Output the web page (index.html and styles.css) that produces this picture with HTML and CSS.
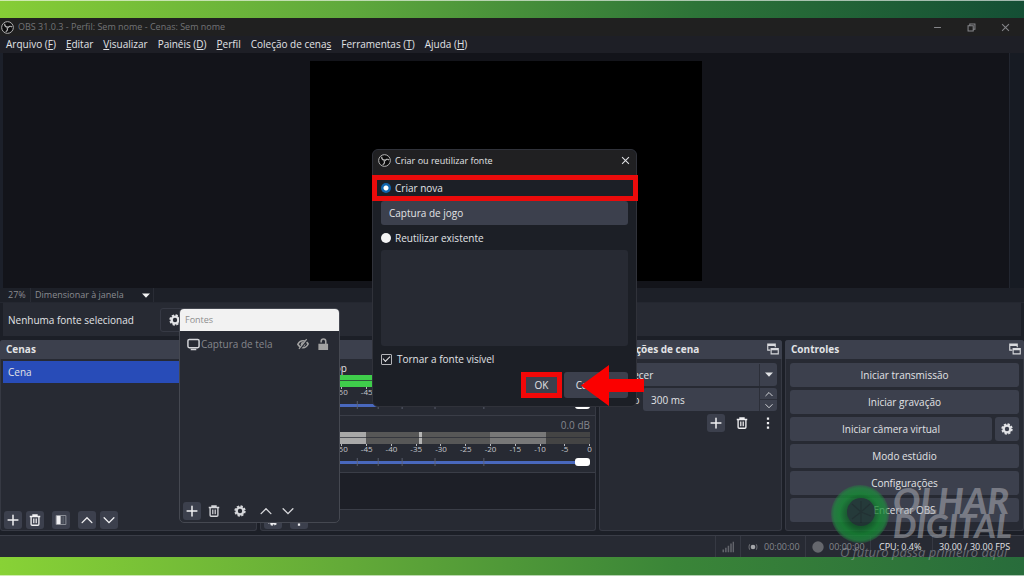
FILE: index.html
```html
<!DOCTYPE html>
<html lang="pt-BR">
<head>
<meta charset="utf-8">
<title>OBS 31.0.3</title>
<link rel="stylesheet" href="styles.css">
</head>
<body>
<svg class="defs" aria-hidden="true">
  <symbol id="obs" viewBox="0 0 16 16"><circle cx="8" cy="8" r="7.200" fill="#0c0c0d" stroke="currentColor" stroke-width="1.200"/><g fill="none" stroke="currentColor" stroke-width="1.500"><path id="arm" d="M8.400 7.300C6 7.600 4.200 6 4.600 3.400"/><path d="M8.400 7.300C6 7.600 4.200 6 4.600 3.400" transform="rotate(120 8 8)"/><path d="M8.400 7.300C6 7.600 4.200 6 4.600 3.400" transform="rotate(240 8 8)"/></g></symbol>
  <symbol id="plus" viewBox="0 0 16 16"><path d="M8 1.500v13M1.500 8h13" stroke="currentColor" stroke-width="2" fill="none" stroke-linecap="round"/></symbol>
  <symbol id="trash" viewBox="0 0 16 16"><path d="M1 3.300h14M5.300 3V1.300h5.400V3M2.800 3.600v10q0 1.400 1.400 1.400h7.600q1.400 0 1.400-1.400v-10" fill="none" stroke="currentColor" stroke-width="1.800"/><path d="M6 6v6.300M8 6v6.300M10 6v6.300" stroke="currentColor" stroke-width="1.100" fill="none"/></symbol>
  <symbol id="filter" viewBox="0 0 16 16"><path d="M1.500 2h13v12h-13z" fill="none" stroke="#8d9098" stroke-width="1.300"/><path d="M2 2.500h5.500v11H2z" fill="currentColor"/><path d="M9.500 3v10M11.500 3v10" stroke="#666a74" stroke-width="1"/></symbol>
  <symbol id="up" viewBox="0 0 16 16"><path d="M1.500 11.500 8 5l6.500 6.500" fill="none" stroke="currentColor" stroke-width="1.800" stroke-linecap="round"/></symbol>
  <symbol id="down" viewBox="0 0 16 16"><path d="M1.500 5 8 11.500 14.500 5" fill="none" stroke="currentColor" stroke-width="1.800" stroke-linecap="round"/></symbol>
  <symbol id="gear" viewBox="0 0 16 16"><circle cx="8" cy="8" r="4.500" fill="none" stroke="currentColor" stroke-width="3.200"/><circle cx="8" cy="8" r="6.500" fill="none" stroke="currentColor" stroke-width="2.200" stroke-dasharray="3 2.105"/></symbol>
  <symbol id="dots" viewBox="0 0 16 16"><path d="M6.500 0.500h3v3h-3zM6.500 6.500h3v3h-3zM6.500 12.500h3v3h-3z" fill="currentColor"/></symbol>
  <symbol id="float" viewBox="0 0 16 16"><path d="M4.500 9.500H1v-8h10v4M1 3.200H11" fill="none" stroke="currentColor" stroke-width="1.500"/><path d="M5.500 7.500H15v7H5.500zM5.500 8.800H15" fill="none" stroke="currentColor" stroke-width="1.500"/></symbol>
  <symbol id="close" viewBox="0 0 16 16"><path d="M3 3l10 10M13 3 3 13" fill="none" stroke="currentColor" stroke-width="1.500"/></symbol>
  <symbol id="caret" viewBox="0 0 8 5"><path d="M0 .5h8L4 4.700z" fill="currentColor"/></symbol>
  <symbol id="ticks" viewBox="0 0 296 10" preserveAspectRatio="none"><path d="M62.500 0v10M83.500 0v10M107.500 0v10M140.500 0v10M189.500 0v10" stroke="#5d6272" stroke-width="1"/></symbol>
</svg>

<div class="app">
  <header class="titlebar">
    <svg class="logo"><use href="#obs"/></svg>
    <span class="titlebar-text">OBS 31.0.3 - Perfil: Sem nome - Cenas: Sem nome</span>
    <button class="win-btn" aria-label="Minimizar"><svg viewBox="0 0 16 16"><path d="M3 8h10" stroke="currentColor" stroke-width="1.500"/></svg></button>
    <button class="win-btn" aria-label="Restaurar"><svg viewBox="0 0 16 16"><path d="M3 5.500h7.500V13H3zM5.500 5.300V3h7.500v7.500h-2.300" fill="none" stroke="currentColor" stroke-width="1.500"/></svg></button>
    <button class="win-btn" aria-label="Fechar"><svg><use href="#close"/></svg></button>
  </header>
  <nav class="menubar">
    <a href="#">Arquivo (<u>F</u>)</a>
    <a href="#"><u>E</u>ditar</a>
    <a href="#"><u>V</u>isualizar</a>
    <a href="#">Painéis (<u>D</u>)</a>
    <a href="#"><u>P</u>erfil</a>
    <a href="#">Coleção de cena<u>s</u></a>
    <a href="#">Ferramentas (<u>T</u>)</a>
    <a href="#">Ajuda (<u>H</u>)</a>
  </nav>

  <main class="preview"><div class="canvas"></div><div class="preview-scroll"></div></main>
  <div class="zoombar">
    <span class="zoom-value">27%</span>
    <button class="zoom-mode"><span>Dimensionar à janela</span><svg class="caret"><use href="#caret"/></svg></button>
  </div>
  <div class="source-bar">
    <span>Nenhuma fonte selecionad</span>
    <button class="source-props" aria-label="Propriedades"><svg class="icon"><use href="#gear"/></svg></button>
  </div>

  <div class="docks">
    <section class="dock">
      <h2 class="dock-title">Cenas</h2>
      <ul class="scene-list"><li class="scene selected">Cena</li></ul>
      <div class="toolbar">
        <button class="tool" aria-label="Adicionar cena"><svg class="icon"><use href="#plus"/></svg></button>
        <button class="tool" aria-label="Remover cena"><svg class="icon"><use href="#trash"/></svg></button>
        <button class="tool group" aria-label="Filtros"><svg class="icon"><use href="#filter"/></svg></button>
        <button class="tool group" aria-label="Subir"><svg class="icon"><use href="#up"/></svg></button>
        <button class="tool" aria-label="Descer"><svg class="icon"><use href="#down"/></svg></button>
      </div>
    </section>

    <section class="dock">
      <h2 class="dock-title">Mixer</h2>
      <div class="channel">
        <label class="channel-head" for="vol1"><span>Áudio do desktop</span></label>
        <div class="meter live"></div>
        <div class="scale"><span>-60</span><span>-55</span><span>-50</span><span>-45</span><span>-40</span><span>-35</span><span>-30</span><span>-25</span><span>-20</span><span>-15</span><span>-10</span><span>-5</span><span>0</span></div>
        <div class="fader"><input id="vol1" type="range" value="100"><svg><use href="#ticks"/></svg></div>
      </div>
      <div class="channel">
        <label class="channel-head" for="vol2"><span>Mic/Aux</span><span class="db">0.0 dB</span></label>
        <div class="meter muted"></div>
        <div class="scale"><span>-60</span><span>-55</span><span>-50</span><span>-45</span><span>-40</span><span>-35</span><span>-30</span><span>-25</span><span>-20</span><span>-15</span><span>-10</span><span>-5</span><span>0</span></div>
        <div class="fader"><input id="vol2" type="range" value="100"><svg><use href="#ticks"/></svg></div>
      </div>
      <div class="mixer-empty"></div>
      <div class="toolbar mixer-tools">
        <button class="tool" aria-label="Propriedades de áudio"><svg class="icon"><use href="#gear"/></svg></button>
        <button class="tool group" aria-label="Mais"><svg class="icon"><use href="#dots"/></svg></button>
      </div>
    </section>

    <section class="dock">
      <h2 class="dock-title">Transições de cena<svg class="icon"><use href="#float"/></svg></h2>
      <div class="transitions">
        <button class="combo"><span>Esmaecer</span><span class="combo-arrow"><svg class="caret"><use href="#caret"/></svg></span></button>
        <div class="duration">
          <label for="dur">Duração</label>
          <div class="spin">
            <input id="dur" type="text" value="300 ms">
            <div class="spin-btns"><button aria-label="Aumentar"><svg><use href="#up"/></svg></button><button aria-label="Diminuir"><svg><use href="#down"/></svg></button></div>
          </div>
        </div>
        <div class="transition-tools">
          <button class="tool" aria-label="Adicionar transição"><svg class="icon"><use href="#plus"/></svg></button>
          <button class="tool flat" aria-label="Remover transição"><svg class="icon"><use href="#trash"/></svg></button>
          <button class="tool flat" aria-label="Opções"><svg class="icon"><use href="#dots"/></svg></button>
        </div>
      </div>
    </section>

    <section class="dock">
      <h2 class="dock-title">Controles<svg class="icon"><use href="#float"/></svg></h2>
      <div class="controls">
        <button class="btn">Iniciar transmissão</button>
        <button class="btn">Iniciar gravação</button>
        <div class="btn-row"><button class="btn">Iniciar câmera virtual</button><button class="btn btn-gear" aria-label="Configurar câmera virtual"><svg class="icon"><use href="#gear"/></svg></button></div>
        <button class="btn">Modo estúdio</button>
        <button class="btn">Configurações</button>
        <button class="btn">Encerrar OBS</button>
      </div>
    </section>
  </div>

  <footer class="status">
    <div class="stat stat-signal"><svg class="icon" viewBox="0 0 14 12"><path d="M1.500 12V9M4.500 12V7M7.500 12V4.500M10.500 12V2M13.300 12V0" stroke="currentColor" stroke-width="1.800"/></svg></div>
    <div class="stat stat-time"><svg class="icon" viewBox="0 0 14 12"><circle cx="7" cy="6" r="2.700" fill="#a5a6aa"/><path d="M3.300 2.800q-2 3.200 0 6.400M10.700 2.800q2 3.200 0 6.400" fill="none" stroke="currentColor" stroke-width="1.200"/></svg><span>00:00:00</span></div>
    <div class="stat stat-time"><svg class="icon" viewBox="0 0 12 12"><circle cx="6" cy="6" r="5.700" fill="currentColor"/></svg><span>00:00:00</span></div>
    <div class="stat stat-cpu">CPU: 0.4%</div>
    <div class="stat stat-fps">30.00 / 30.00 FPS</div>
  </footer>
</div>

<section class="sources">
  <h2 class="sources-title">Fontes</h2>
  <div class="source-item">
    <svg class="icon monitor" viewBox="0 0 14 13"><rect x="1" y="1" width="12" height="9" rx="1.500" fill="none" stroke="currentColor" stroke-width="1.600"/><path d="M4 12h6" stroke="currentColor" stroke-width="1.600"/></svg>
    <span class="source-name">Captura de tela</span>
    <svg class="icon" viewBox="0 0 14 12"><path d="M1 6.500Q3 2.200 7 2.200t6 3.800q-2 4.300-6 4.300T1 6.500z" fill="none" stroke="currentColor" stroke-width="1.900"/><circle cx="7" cy="6.200" r="2.600" fill="currentColor"/><path d="M12.300.5 3.300 11.700" stroke="#272a33" stroke-width="2.400"/><path d="M11.300.3 2.300 11.700" stroke="currentColor" stroke-width="1.500"/></svg>
    <svg class="icon" viewBox="0 0 12 13"><path d="M1 6.300h10.500V13H1z" fill="currentColor"/><path d="M4 4.800V3.500Q4 1 6.500 1T9 3.500V7" fill="none" stroke="currentColor" stroke-width="1.700"/></svg>
  </div>
  <div class="toolbar">
    <button class="tool" aria-label="Adicionar fonte"><svg class="icon"><use href="#plus"/></svg></button>
    <button class="tool flat" aria-label="Remover fonte"><svg class="icon"><use href="#trash"/></svg></button>
    <button class="tool flat group" aria-label="Propriedades da fonte"><svg class="icon"><use href="#gear"/></svg></button>
    <button class="tool flat group" aria-label="Subir fonte"><svg class="icon"><use href="#up"/></svg></button>
    <button class="tool flat" aria-label="Descer fonte"><svg class="icon"><use href="#down"/></svg></button>
  </div>
</section>

<form class="dialog">
  <header class="dialog-head"><svg class="logo"><use href="#obs"/></svg><h2>Criar ou reutilizar fonte</h2><button type="button" class="win-btn" aria-label="Fechar"><svg><use href="#close"/></svg></button></header>
  <label class="option marked"><input type="radio" name="mode" checked><span>Criar nova</span></label>
  <div class="dialog-body">
    <input class="name-input" type="text" value="Captura de jogo" aria-label="Nome">
    <label class="option"><input type="radio" name="mode"><span>Reutilizar existente</span></label>
    <div class="existing"></div>
    <label class="visible"><input type="checkbox" checked><span>Tornar a fonte visível</span></label>
    <div class="dialog-actions"><button type="button" class="ok">OK</button><button type="button" class="cancel">Cancelar</button></div>
  </div>
  <svg class="arrow" viewBox="0 0 63 41"><path d="M0 20.500 28 0v14h35v13H28v14z" fill="#fb0000"/></svg>
</form>

<div class="watermark">
  <svg class="eye" viewBox="0 0 60 60"><defs><radialGradient id="iris"><stop offset=".45" stop-color="#0f6428"/><stop offset=".7" stop-color="#149234"/><stop offset=".9" stop-color="#1f8a3e"/><stop offset="1" stop-color="#277d43" stop-opacity=".5"/></radialGradient></defs><circle cx="30" cy="30" r="29" fill="url(#iris)"/><circle cx="31" cy="28" r="14" fill="#1e3834"/><path d="M31 28 22 20M31 28l9-8M31 28v-11M31 28l10 4M31 28l-9 7M31 28v11" stroke="#1a2c2b" stroke-width="1.200"/></svg>
  <div class="brand"><span class="brand-top">OLHAR</span><span>DIGITAL</span></div>
  <p class="tagline">O futuro passa primeiro aqui</p>
</div>
</body>
</html>
```

FILE: styles.css
```css
* { box-sizing: border-box; }

body {
  margin: 0;
  height: 100vh;
  position: relative;
  overflow: hidden;
  padding: 18px 0 19px;
  color: #e2e3e6;
  font: 10px/14px "Open Sans", "Noto Sans", sans-serif;
  background:
    linear-gradient(#ffffff99, #ffffff99) top / 100% 1px no-repeat,
    linear-gradient(#ffffff99, #ffffff99) bottom / 100% 1px no-repeat,
    linear-gradient(90deg, #86cd36, #5fa93c 34%, #2d7438 68%, #144f35) top / 100% 18px no-repeat,
    linear-gradient(90deg, #88d236, #63aa38 34%, #3a8538 66%, #286c3b) bottom / 100% 19px no-repeat;
}

button, input { font: inherit; color: inherit; margin: 0; }
button { padding: 0; border: 0; background: none; }
h2, p, ul { margin: 0; padding: 0; }
h2 { font-size: 10px; }
a { color: inherit; text-decoration: none; }
.defs { position: absolute; width: 0; height: 0; }
.icon { width: 12px; height: 12px; flex: none; display: block; }
.logo { width: 13px; height: 13px; flex: none; }
.caret { width: 8px; height: 5px; }

.app { height: 100%; display: flex; flex-direction: column; background: #1c1f27; }

.titlebar { height: 18px; flex: none; display: flex; align-items: center; padding: 0 10px 0 1px; background: #202020; color: #85868a; }
.titlebar .logo { color: #b5b5b5; }
.titlebar-text { flex: 1; padding-left: 4px; font-size: 9px; color: #737477; }
.win-btn { width: 18px; height: 14px; display: flex; align-items: center; justify-content: center; }
.win-btn svg { width: 11px; height: 11px; }
.titlebar .win-btn + .win-btn { margin-left: 16px; }

.menubar { height: 17px; flex: none; display: flex; gap: 10px; padding: 1px 6px 0; background: #1e1f26; }

.preview { flex: 1; display: flex; justify-content: center; align-items: center; padding-left: 3px; background: linear-gradient(90deg, #1c202a 3px, #13141a 3px); }
.canvas { height: 220px; aspect-ratio: 16 / 9; margin: 0 auto; background: #000; }
.preview-scroll { align-self: stretch; width: 15px; border-left: 1px solid #222630; background: #171b23; }

.zoombar { height: 15px; flex: none; display: flex; align-items: center; color: #8b8c91; font-size: 9px; background: #1d2028; border-bottom: 1px solid #242730; }
.zoom-value { width: 31px; padding-left: 8px; border-right: 1px solid #292c35; }
.zoom-mode { display: flex; align-items: center; justify-content: space-between; width: 123px; padding: 0 3px 0 4px; border-right: 1px solid #292c35; }
.zoom-mode .caret { color: #f3f3f3; }

.source-bar { height: 33px; flex: none; margin: 0 3px; padding-left: 5px; display: flex; align-items: center; background: #272a33; }
.source-bar span { width: 152px; }
.source-props { width: 60px; height: 24px; padding-left: 8px; border: 1px solid #363944; border-radius: 3px; }

.docks { flex: none; display: grid; grid-template-columns: 257fr 336fr 183fr 239fr; gap: 3px; margin-top: 4px; }
.dock { display: flex; flex-direction: column; min-width: 0; background: #272a33; border: solid #363943; border-width: 0 1px 1px; border-radius: 3px; }
.dock-title { height: 19px; flex: none; margin: 0 -1px; padding: 0 3px 1px 6px; display: flex; align-items: center; justify-content: space-between; background: #3c404d; border-radius: 3px 3px 0 0; font-weight: 700; }
.dock-title .icon { color: #d8d9dd; }

.scene-list { flex: 1; padding: 2px 2px 0; list-style: none; }
.scene { height: 22px; padding: 4px 5px; }
.scene.selected { background: #284cb8; }

.toolbar { flex: none; display: flex; gap: 4px; padding: 1px 3px; }
.tool { width: 18px; height: 18px; display: flex; align-items: center; justify-content: center; border-radius: 3px; background: #3c404d; color: #f0f0f2; }
.tool.flat { background: none; }
.tool.group { margin-left: 4px; }

.channel { padding: 3px 5px 4px 4px; border-bottom: 1px solid #3a3d47; }
.channel-head { height: 13px; display: flex; justify-content: space-between; line-height: 13px; }
.db { color: #85878e; }
.meter { height: 12px; margin-left: 30px; position: relative; }
.meter::after { content: ""; position: absolute; inset: 5px 0 auto; height: 1px; background: #272a33; opacity: .7; }
.live { background: linear-gradient(90deg, #3fce4b 45%, #28662f 45% 66%, #7c7a2c 66% 85%, #7a2a2e 85%); }
.muted { background: linear-gradient(90deg, #a8a8a8 24%, #575757 24% 42%, #b5b5b5 42% 43%, #575757 43% 66%, #787878 66% 85%, #444 85%); }
.scale { display: grid; grid-template-columns: repeat(13, 1fr); margin: 0 -12px 0 15px; height: 12px; font-size: 8px; line-height: 10px; text-align: center; color: #c6c7cc; }
.scale span::before { content: ""; display: block; width: 1px; height: 2px; margin: 0 auto -2px; background: #b9bac0; }
.fader { display: grid; height: 12px; margin-left: 30px; align-items: center; }
.fader > * { grid-area: 1 / 1; width: 100%; height: 8px; }
.fader svg { pointer-events: none; }
.fader input { appearance: none; background: none; height: 8px; }
.fader input::-webkit-slider-runnable-track { height: 3px; background: #4968bd; }
.fader input::-webkit-slider-thumb { appearance: none; width: 15px; height: 8px; margin-top: -3px; border-radius: 3px; background: #fff; }
.mixer-empty { flex: 1; background: #1d1f27; border-bottom: 1px solid #3a3d47; }
.mixer-tools { padding-left: 3px; }

.transitions { display: flex; flex-direction: column; gap: 2px; padding: 4px 4px 0 5px; }
.combo { height: 23px; padding-left: 3px; display: flex; justify-content: space-between; align-items: center; background: #3c404d; border-radius: 3px; }
.combo-arrow { width: 18px; height: 22px; display: grid; place-items: center; border-left: 1px solid #2c2f39; }
.duration { display: flex; align-items: center; justify-content: space-between; }
.duration label { margin-left: -5px; white-space: nowrap; }
.spin { display: flex; width: 134px; height: 23px; background: #3c404d; border-radius: 3px; }
.spin input { flex: 1; min-width: 0; border: 0; padding: 0 8px; background: none; }
.spin-btns { width: 18px; display: flex; flex-direction: column; border-left: 1px solid #2c2f39; }
.spin-btns button { flex: 1; display: grid; place-items: center; }
.spin-btns button + button { border-top: 1px solid #2c2f39; }
.spin-btns svg { width: 8px; height: 8px; }
.transition-tools { display: flex; justify-content: flex-end; gap: 8px; padding-top: 1px; }

.controls { display: flex; flex-direction: column; gap: 3px; padding: 4px 4px 8px; }
.btn { height: 24px; flex: 1 0 24px; background: #3c404d; border-radius: 3px; text-align: center; }
.btn-row { display: flex; gap: 3px; }
.btn-gear { flex: 0 0 24px; display: grid; place-items: center; }

.status { height: 22px; flex: none; margin-top: 4px; display: flex; justify-content: flex-end; background: #272a33; border-top: 1px solid #3a3d47; font-size: 9px; }
.stat { display: flex; align-items: center; gap: 5px; padding: 0 6px; border-left: 1px solid #363943; }
.stat-signal { width: 25px; color: #62646b; }
.stat-time { width: 65px; color: #85878d; }
.stat-time .icon { color: #65676d; }
.stat-cpu { width: 62px; padding-left: 8px; }
.stat-fps { width: 92px; white-space: nowrap; }

.sources { position: absolute; left: 179px; top: 308px; width: 161px; height: 215px; display: flex; flex-direction: column; background: #272a33; border: 1px solid #454851; border-radius: 5px; overflow: hidden; }
.sources-title { height: 23px; margin: -1px -1px 0; padding: 5px 6px; font-size: 9px; font-weight: 400; background: #f2f2f2; color: #8e8e8e; }
.source-item { flex: 1; display: flex; align-items: flex-start; gap: 8px; padding: 7px 10px 0 7px; line-height: 13px; color: #a2a2a2; }
.source-item .monitor { color: #d3d4d8; width: 13px; height: 13px; margin-right: -7px; }
.source-name { flex: 1; color: #85868b; white-space: nowrap; }
.sources .toolbar { padding: 0 3px 2px; }
.sources .flat { color: #d5d6da; }

.dialog { position: absolute; left: 372px; top: 149px; width: 265px; background: #1c1f26; border: 1px solid #30323a; border-radius: 6px; }
.dialog-head { height: 25px; padding: 0 2px 4px 5px; display: flex; align-items: center; gap: 4px; background: #202022; border-radius: 6px 6px 0 0; }
.dialog-head h2 { flex: 1; font-size: 9px; font-weight: 400; }
.dialog-head .logo { color: #bababa; }
.option { display: flex; align-items: center; gap: 4px; height: 25px; }
.marked { height: 26px; margin: 0 -2px 0 -1px; padding: 0 4px; border: 5px solid #ea0b0b; }
.option input { appearance: none; width: 10px; height: 10px; border-radius: 50%; background: #f4f4f4; }
.option input:checked { background: radial-gradient(circle, #fff 2px, #0e64ad 3px); }
.dialog-body { padding: 0 8px 8px; }
.name-input { display: block; width: 100%; height: 24px; border: 0; border-radius: 3px; padding: 0 8px; background: #3c404d; }
.existing { height: 96px; background: #272a33; border-radius: 3px; }
.visible { display: flex; align-items: center; gap: 5px; height: 26px; }
.visible input { appearance: none; width: 11px; height: 11px; border: 1px solid #b4b5b9; border-radius: 1px; display: grid; place-items: center; }
.visible input::before { content: ""; width: 6px; height: 3px; border: solid #e6e6e8; border-width: 0 0 1px 1px; rotate: -45deg; translate: 0 -1px; }
.dialog-actions { display: flex; justify-content: flex-end; gap: 2px; height: 26px; }
.ok { width: 41px; background: #3c404d; border: 5px solid #f20808; }
.cancel { width: 64px; background: #3c404d; border-radius: 3px; }
.arrow { position: absolute; left: 208px; bottom: 0; width: 63px; height: 41px; }

.watermark { position: absolute; right: 10px; bottom: 16px; width: 184px; display: grid; grid-template-columns: auto 1fr; pointer-events: none; }
.eye { width: 60px; height: 60px; opacity: .75; }
.brand { display: flex; flex-direction: column; font: italic 900 33px/25px Lato, sans-serif; color: #a9abb2; opacity: .55; padding: 4px 0 0 3px; }
.brand-top { font-size: 36px; }
.tagline { grid-column: 1 / -1; padding-left: 10px; font-size: 13px; line-height: 16px; font-style: italic; white-space: nowrap; color: #a9abb2; opacity: .5; }
```
